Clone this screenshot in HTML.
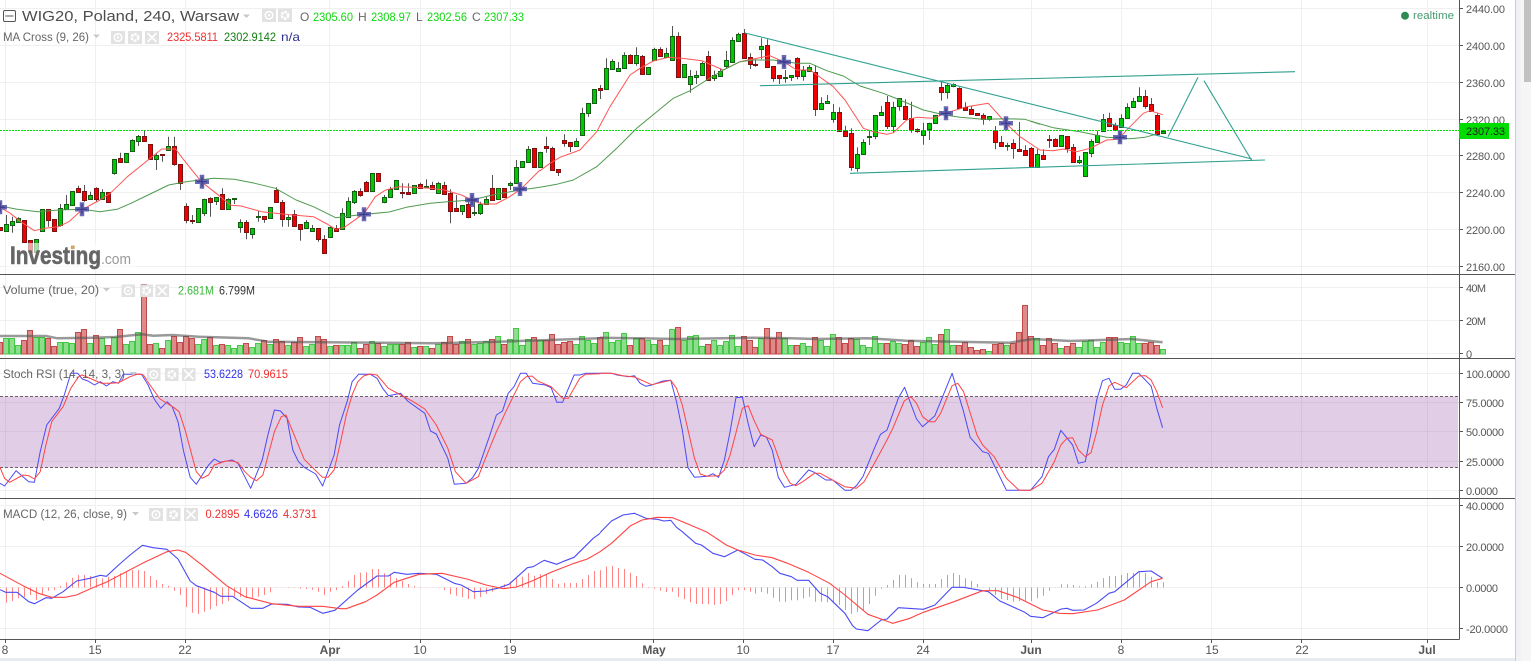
<!DOCTYPE html>
<html><head><meta charset="utf-8"><title>WIG20 chart</title>
<style>
html,body{margin:0;padding:0;background:#fff;width:1531px;height:661px;overflow:hidden}
svg{position:absolute;left:0;top:0;display:block}
text{font-family:"Liberation Sans",sans-serif}
</style></head><body>
<svg id="c" xmlns="http://www.w3.org/2000/svg" width="1531" height="661" viewBox="0 0 1531 661">
<rect width="1531" height="661" fill="#fff"/>
<g id="grid"></g>
<rect x="0" y="396.5" width="1458" height="71" fill="#9b59a8" opacity=".3"/>
<path d="M0 396.5H1458M0 467.5H1458" stroke="#6b5f6b" stroke-width="1" stroke-dasharray="3 2" fill="none"/>
<g id="vol"></g><g id="candles"></g><g id="lines"></g>
<rect x="7" y="243" width="128" height="28" fill="#fff" opacity=".62"/>
<text x="10" y="264" font-size="25" font-weight="bold" fill="#666" stroke="#666" stroke-width=".6" textLength="91" lengthAdjust="spacingAndGlyphs">Investing</text>
<text x="101" y="264" font-size="15" fill="#999" textLength="30" lengthAdjust="spacingAndGlyphs">.com</text>
<circle cx="72.5" cy="247.5" r="1.8" fill="#e9a34e"/>
<g id="icons"></g>
<!-- legend -->
<rect x="3.5" y="10.5" width="12" height="11" rx="1.5" fill="none" stroke="#555"/><path d="M5.5 16H13.5" stroke="#555"/>
<text x="22" y="21" font-size="15" fill="#4d4d4d" textLength="217" lengthAdjust="spacingAndGlyphs">WIG20, Poland, 240, Warsaw</text>
<text x="300" y="21" font-size="12" fill="#666">O</text><text x="313" y="21" font-size="12" fill="#0fd80f" textLength="40" lengthAdjust="spacingAndGlyphs">2305.60</text>
<text x="358" y="21" font-size="12" fill="#666">H</text><text x="371" y="21" font-size="12" fill="#0fd80f" textLength="40" lengthAdjust="spacingAndGlyphs">2308.97</text>
<text x="416" y="21" font-size="12" fill="#666">L</text><text x="427" y="21" font-size="12" fill="#0fd80f" textLength="40" lengthAdjust="spacingAndGlyphs">2302.56</text>
<text x="472" y="21" font-size="12" fill="#666">C</text><text x="484" y="21" font-size="12" fill="#0fd80f" textLength="40" lengthAdjust="spacingAndGlyphs">2307.33</text>
<text x="3" y="41" font-size="11.5" fill="#666" textLength="86" lengthAdjust="spacingAndGlyphs">MA Cross (9, 26)</text>
<text x="167" y="41" font-size="12" fill="#f03030" textLength="51" lengthAdjust="spacingAndGlyphs">2325.5811</text>
<text x="224" y="41" font-size="12" fill="#118011" textLength="52" lengthAdjust="spacingAndGlyphs">2302.9142</text>
<text x="281" y="41" font-size="12" fill="#303090" textLength="19" lengthAdjust="spacingAndGlyphs">n/a</text>
<text x="3" y="294" font-size="11.5" fill="#666" textLength="96" lengthAdjust="spacingAndGlyphs">Volume (true, 20)</text>
<text x="178" y="294.5" font-size="12" fill="#3cb83c" textLength="36" lengthAdjust="spacingAndGlyphs">2.681M</text>
<text x="219" y="294.5" font-size="12" fill="#333" textLength="36" lengthAdjust="spacingAndGlyphs">6.799M</text>
<text x="3" y="378" font-size="11.5" fill="#666" textLength="122" lengthAdjust="spacingAndGlyphs">Stoch RSI (14, 14, 3, 3)</text>
<text x="204" y="378" font-size="12" fill="#3030f0" textLength="39" lengthAdjust="spacingAndGlyphs">53.6228</text>
<text x="248" y="378" font-size="12" fill="#f03030" textLength="40" lengthAdjust="spacingAndGlyphs">70.9615</text>
<text x="3" y="518" font-size="11.5" fill="#666" textLength="124" lengthAdjust="spacingAndGlyphs">MACD (12, 26, close, 9)</text>
<text x="205.5" y="518" font-size="12" fill="#f03030" textLength="34" lengthAdjust="spacingAndGlyphs">0.2895</text>
<text x="244" y="518" font-size="12" fill="#3030f0" textLength="34" lengthAdjust="spacingAndGlyphs">4.6626</text>
<text x="283" y="518" font-size="12" fill="#f03030" textLength="34" lengthAdjust="spacingAndGlyphs">4.3731</text>
<circle cx="1405" cy="15.7" r="4" fill="#2e8b57"/>
<text x="1413" y="19" font-size="11" fill="#4a9a70" textLength="41" lengthAdjust="spacingAndGlyphs">realtime</text>
<!-- axes -->
<path d="M0 274.5H1515M0 358.5H1515M0 498.5H1515M0 639.5H1459.5M1459.5 0V639.5" stroke="#555" fill="none"/>
<g font-size="11" fill="#555">
<text x="1466" y="13" textLength="39">2440.00</text><text x="1466" y="50" textLength="39">2400.00</text><text x="1466" y="87" textLength="39">2360.00</text><text x="1466" y="124" textLength="39">2320.00</text><text x="1466" y="160" textLength="39">2280.00</text><text x="1466" y="197" textLength="39">2240.00</text><text x="1466" y="234" textLength="39">2200.00</text><text x="1466" y="271" textLength="39">2160.00</text>
<text x="1466" y="292" textLength="20">40M</text><text x="1466" y="325" textLength="20">20M</text><text x="1466" y="358">0</text>
<text x="1466" y="378" textLength="44">100.0000</text><text x="1466" y="407" textLength="38">75.0000</text><text x="1466" y="436" textLength="38">50.0000</text><text x="1466" y="466" textLength="38">25.0000</text><text x="1466" y="495" textLength="32">0.0000</text>
<text x="1466" y="510" textLength="38">40.0000</text><text x="1466" y="551" textLength="38">20.0000</text><text x="1466" y="592" textLength="32">0.0000</text><text x="1466" y="633" textLength="42">-20.0000</text>
</g>
<rect x="1459" y="123" width="50" height="16" fill="#00dc00"/>
<text x="1466" y="135" font-size="11" fill="#222" textLength="39">2307.33</text>
<g font-size="12" fill="#555" text-anchor="middle">
<text x="5" y="654">8</text><text x="95" y="654">15</text><text x="185" y="654">22</text><text x="330" y="654" font-weight="bold">Apr</text><text x="420" y="654">10</text><text x="510" y="654">19</text><text x="654" y="654" font-weight="bold">May</text><text x="743" y="654">10</text><text x="833" y="654">17</text><text x="923" y="654">24</text><text x="1031" y="654" font-weight="bold">Jun</text><text x="1121" y="654">8</text><text x="1212" y="654">15</text><text x="1302" y="654">22</text><text x="1427" y="654" font-weight="bold">Jul</text>
</g>
<!-- bottom + scrollbar -->
<rect x="0" y="658" width="1515" height="3" fill="#e8ecef"/>
<rect x="1515" y="0" width="1" height="661" fill="#c8ccd2"/>
<rect x="1516" y="0" width="5" height="661" fill="#f0f2f5"/>
<rect x="1521" y="0" width="10" height="661" fill="#f6f6f6"/>
<rect x="1524" y="0" width="7" height="82" fill="#c1c1c1"/>
</svg>
<script>
var NS="http://www.w3.org/2000/svg";
function el(p,n,a){var e=document.createElementNS(NS,n);for(var k in a)e.setAttribute(k,a[k]);document.getElementById(p).appendChild(e);return e}
function G(i){return 5.996*i}
var ys=[8.5,45.5,82.5,119.5,155.5,192.5,229.5,266.5,287.5,320.5,353.5,373.5,402.5,431.5,461.5,490.5,505.5,546.5,587.5,628.5];
var xs=[5,95,185,329,420,510,653,743,833,923,1031,1121,1211,1301,1427];
var d="";ys.forEach(function(y){d+="M0 "+y+"H1459"});xs.forEach(function(x){d+="M"+(x+.5)+" 0V639"});
el("grid","path",{d:d,stroke:"#f0f0f0",fill:"none"});
var t="";ys.forEach(function(y){t+="M1459 "+y+"h4"});xs.forEach(function(x){t+="M"+(x+.5)+" 639v4"});
el("grid","path",{d:t,stroke:"#555",fill:"none"});
var C="682 690 r;673 692 g 645;664 674 g 650 698;655 665 g 652;660 725 r;720 755 r;718 755 g;628 692 g;628 660 r 628 680;657 692 r;625 675 g 612 680;613 626 g 585 630;574 614 g;565 575 r 557;574 600 r 555 605;586 596 g 575;564 598 r 562 605;576 596 g 568;577 607 r;478 518 g 478 524;475 485 r 458;460 485 g;420 452 g 418 456;408 422 g 405 438;408 424 r 390;433 478 r;465 478 g 458 510;462 466 r 462 485;439 449 g 410;439 493 r 410 497;493 548 r 493 570;618 661 r 610 670;660 664 r 645 672;625 665 g;596 638 g 596 648;595 605 r 592 650;592 604 g 592 615;583 626 r 565;598 626 g 595;595 598 g 595 612;665 680 g 658 698;667 697 r 660 718;685 701 g 685 716;649 651 g 633 665;649 656 r 649 668;622 653 g;570 605 r 562;606 658 r 600 680;652 658 g 645 680;643 678 r 630;673 686 r 673 722;667 683 g 660;685 692 g 675;685 716 r 685 725;717 758 r 705;682 710 g 680 712;685 692 r 675;638 688 g 625;604 650 g 592;574 605 g 570 612;574 584 r 565 590;547 572 r 543;520 572 g;520 544 r;592 607 g 585 610;568 592 g 560;541 568 g;576 578 r 550 595;576 581 r 550 583;556 580 g;553 563 r 548;559 562 g 538 565;556 568 r 545 570;549 580 g 545 582;556 581 r 545;580 632 r 568 670;625 632 r 585 635;616 632 g 616 645;613 652 r 605 655;636 640 g 600 648;613 638 g 605 645;598 613 g 590;565 600 r 525;565 598 g;565 590 r;550 556 g 545 570;500 548 g 480;484 500 g 484 503;448 487 g 438;445 502 r;455 500 g;"
+"437 445 r 410 458;445 510 r 440 512;508 515 r 508 528;421 428 r 403 440;427 437 r 425 456;424 437 g 415;340 404 g 323 408;310 340 g 310 350;268 310 g;265 269 r 255 297;205 268 g 175;184 206 g 178;205 213 g 186 216;166 205 g 157;166 188 r 163;166 190 g 142 197;169 221 r 165 225;202 221 g;148 179 g 143;148 167 r 142 170;160 170 g 143;109 179 g 78;109 230 r 97;193 230 g 193 233;229 251 g 210 278;226 230 g 212 252;190 224 g 185;169 239 r 153;226 235 g 212 243;212 227 g 205;181 197 g 153 205;121 185 g 112;103 122 g 98 125;100 175 r 87;172 193 r 160 207;192 194 r 178 200;139 146 g 115 178;136 200 r 118;199 235 r 199 245;226 235 r 226 252;232 235 g 210 248;226 232 g 226 243;175 229 r 172 238;210 229 g 198 242;202 212 g 195;217 328 r 195 348;308 328 g 292;304 308 g 285;337 358 g 312 368;337 394 r 322;394 409 r 377;400 502 r 385 512;463 505 g 442 515;427 463 g 418;408 412 g 392 435;346 409 g 346 418;337 344 g 318 348;307 377 r 288 387;322 377 g 305 400;295 319 g 295 332;319 358 r 298;355 390 r 305 398;388 394 r 385 398;391 406 g 368 434;370 388 g 368 420;346 370 g;262 277 r 243 302;256 277 g 250 296;253 257 g 250 262;265 323 r 262;322 329 r 307;327 343 r 318;340 344 r;346 358 r 340 374;349 358 g 349 362;389 427 r 378 448;427 439 r 408;435 437 g 428 452;428 445 r 418 476;446 454 r 366;451 466 r 436;445 500 r 441;461 500 g 448;466 476 r 448;417 419 r 405 443;418 437 r 415;406 437 g;409 443 r 409 458;442 487 r 432;481 485 g 468 492;457 529 g;422 458 g 418 472;406 425 g 392;356 392 g 342;355 377 r 338;376 391 r 368;355 380 g 343;322 355 g 310;304 322 g 293;289 302 g 262;289 317 r 270 326;313 332 r 294;346 401 r 338;394 400 g 390";
var cs=C.split(";").map(function(s){return s.split(" ")});
var w="",gb="",rb="";
cs.forEach(function(a,i){var t=+a[0]/3,b=+a[1]/3,wt=a[3]?+a[3]/3:t,wb=a[4]?+a[4]/3:b,r=Math.round(G(i));
 var T=Math.round(t)+.5,B=Math.round(b)+.5;if(B<=T)B=T+1;
 w+="M"+(r+.5)+" "+wt.toFixed(1)+"V"+wb.toFixed(1);
 var s="M"+(r-1.5)+" "+T+"H"+(r+2.5)+"V"+B+"H"+(r-1.5)+"Z";
 if(a[2]=="g")gb+=s;else rb+=s;});
el("candles","path",{d:w,stroke:"#555",fill:"none"});
el("candles","path",{d:gb,fill:"#00c800",stroke:"#155c15"});
el("candles","path",{d:rb,fill:"#f00000",stroke:"#7a1414"});
/* volume */
var V=[200,190,190,210,195,165,185,185,190,213,202,202,204,172,162,204,180,190,210,185,162,208,198,172,28,208,204,220,195,183,202,183,190,208,192,186,210,208,210,220,210,203,216,204,196,207,193,198,210,202,186,213,207,183,192,213,210,210,210,202,219,208,198,204,213,207,207,207,201,216,213,213,219,208,202,183,207,198,192,207,204,198,192,183,207,192,160,210,192,186,195,196,177,207,201,198,207,183,195,204,187,171,200,195,175,210,190,189,195,207,195,210,162,156,195,183,180,213,207,195,210,198,180,213,183,195,216,190,159,190,171,190,210,210,204,213,186,195,213,177,186,204,189,192,210,216,183,204,205,198,204,207,195,213,201,186,207,177,162,210,210,201,216,225,222,228,207,204,210,203,171,90,183,190,210,189,204,219,213,204,216,198,195,216,201,186,186,201,204,183,204,204,201,210,222];
var vg="",vr="";V.forEach(function(y,i){var top=Math.round(275+y/3)+.5,r=Math.round(G(i));var s="M"+(r-2.5)+" 354V"+top+"H"+(r+2.5)+"V354Z";if(cs[i]&&cs[i][2]=="g")vg+=s;else vr+=s;});
el("vol","path",{d:vg,fill:"#8edc8e",stroke:"#45c845"});
el("vol","path",{d:vr,fill:"#dc8a8a",stroke:"#c24a4a"});
function P(s,sx,ox,sy,oy){return s.split(" ").map(function(p){var a=p.split(",");return (+a[0]/sx+ox).toFixed(1)+","+(+a[1]/sy+oy).toFixed(1)}).join(" ")}
function L(pts,col,wd,op){el("lines","polyline",{points:pts,fill:"none",stroke:col,"stroke-width":wd,opacity:op||1,"stroke-linejoin":"round"})}
var Z1=2.904,Z4=2.613;
/* volume MA */
L(P("0,183 120,183 150,190 240,188 300,186 372,178 400,182 450,180 520,185 650,190 700,200 1130,205 1200,203 1300,200 1568,190",Z4,0,3,275),"#555",2.5,.6);
L(P("0,188 100,190 200,192 400,188 500,190 560,192 700,190 800,197 1000,202 1070,203 1130,192 1230,198 1390,192 1470,202",Z4,600,3,275),"#555",2.5,.6);
/* MA lines */
var R="#f55",Gn="#4f9a4f";
L(P("0,622 30,640 60,665 100,692 130,685 170,680 200,665 240,628 290,600 320,580 370,530 430,480 470,447 510,447 530,475 585,545 640,590 670,616 700,618 760,635 800,640 850,645 910,650 950,672 975,688 1000,682 1058,640 1090,590 1120,570 1160,560 1200,562 1250,565 1290,570 1340,585 1370,600 1400,612 1440,612 1480,590 1512,568 1568,510",Z1,0,3,0),R,1);
L(P("0,512 30,490 60,472 120,450 170,395 210,320 270,225 300,205 340,183 385,172 425,175 485,182 550,210 600,185 640,177 690,167 730,185 770,210 810,210 880,260 915,300 970,385 1000,395 1040,403 1060,398 1100,360 1130,352 1180,355 1215,340 1280,320 1345,310 1400,372 1440,410 1500,450",3,540,3,0),R,1);
L(P("30,450 70,452 100,447 140,455 180,445 230,420 265,418 300,380 340,340 360,332 398,344",3,1030,3,0),R,1);
L(P("0,618 50,628 110,635 170,630 240,628 290,635 340,628 380,610 430,585 490,555 540,545 620,535 680,538 740,550 800,565 860,600 910,620 975,653 1040,645 1130,636 1180,622 1250,610 1300,605 1370,600 1430,585 1510,570 1568,562",Z1,0,3,0),Gn,1);
L(P("0,562 50,553 100,540 170,500 230,445 290,385 345,340 400,295 450,272 500,240 550,210 600,185 640,180 700,180 770,190 810,190 860,212 910,228 960,258 1030,280 1080,300 1150,330 1215,345 1260,352 1330,358 1400,356 1455,358 1500,373",3,540,3,0),Gn,1);
L(P("0,363 70,383 150,395 230,412 300,416 345,412 380,402",3,1030,3,0),Gn,1);
/* crosses */
[[0,207.3],[82,209.3],[202,181.7],[364,214.3],[472,200],[520,189],[784,62],[946,113.3],[1006,123.3],[1120,137.3]].forEach(function(p){
 el("lines","path",{d:"M"+(p[0]-7)+" "+p[1]+"h14M"+p[0]+" "+(p[1]-7)+"v14",stroke:"#5050a6","stroke-width":4.5,opacity:.85,fill:"none"});
 el("lines","path",{d:"M"+(p[0]-5)+" "+p[1]+"h10M"+p[0]+" "+(p[1]-5)+"v10",stroke:"#2f2f85","stroke-width":1.2,opacity:.8,fill:"none"});
});
/* price line */
el("lines","path",{d:"M0 130.5H1459",stroke:"#00dc00","stroke-width":1,"stroke-dasharray":"2 1",fill:"none"});
/* trend lines */
el("lines","path",{d:"M745 33L1252 159M760 85.7L1295 71.7M850 173.3L1265 160M1168 136.7L1198 77.3M1204 80.7L1252 161",stroke:"#2fa08e","stroke-width":1.1,fill:"none"});
/* stoch */
var B="#4a4af5",RR="#f44";
L(P("0,625 12,633 42,587 75,620 90,622 105,530 122,450 155,400 168,360 185,295 203,295 215,312 230,318 247,330 262,320 278,333 295,320 310,325 322,298 370,298 387,330 403,372 420,400 437,380 450,395 465,440 480,530 497,607 513,628 545,570 560,552 575,562 607,555 622,565 655,640 685,555 700,480 717,405 733,408 750,430 765,525 780,560 795,577 825,597 843,633 873,540 887,450 907,380 920,320 937,298 968,298 985,310 1000,340 1015,362 1047,355 1065,378 1110,415 1125,468 1140,477 1170,550 1187,628 1218,625 1235,608 1250,580 1280,480 1297,420 1313,408 1328,355 1343,335 1360,295 1375,295 1392,325 1425,330 1440,338 1455,382 1470,382 1500,300 1515,300 1530,295 1568,295",Z4,0,3,275),B,1);
L(P("0,577 12,610 25,622 60,600 75,602 90,612 105,590 120,510 135,440 165,395 185,340 205,305 215,300 245,315 265,325 290,325 310,323 340,305 360,297 375,300 392,330 418,372 455,398 468,410 485,470 513,590 528,610 545,600 560,570 590,558 607,558 622,563 640,590 655,607 670,617 687,600 717,470 735,425 747,420 765,470 795,553 825,587 843,607 857,607 873,585 890,500 905,420 920,360 935,320 950,303 967,297 985,300 1015,340 1047,360 1080,380 1110,402 1140,450 1170,520 1190,590 1218,625 1250,605 1265,560 1297,470 1328,395 1360,320 1375,305 1390,303 1405,318 1440,335 1470,370 1485,370 1515,310 1530,298 1568,296",Z4,0,3,275),RR,1);
L(P("0,295 30,295 45,300 75,305 90,302 105,325 120,334 135,330 165,318 185,316 200,380 215,465 230,578 247,607 280,604 295,596 310,607 325,555 340,470 355,368 372,366 387,445 403,515 420,480 435,487 450,525 466,607 482,637 512,628 545,585 560,592 590,615 608,615 640,646 655,646 670,632 687,605 717,520 733,478 750,465 780,368 796,337 827,432 843,455 875,422 890,380 920,295 950,410 967,487 1000,530 1015,535 1062,646 1125,646 1155,605 1172,545 1187,523 1204,466 1235,510 1250,565 1268,560 1283,475 1298,375 1313,317 1330,310 1345,343 1360,343 1375,330 1392,295 1408,295 1440,333 1455,400 1470,458",Z4,600,3,275),B,1);
L(P("0,295 30,295 60,302 90,306 135,329 185,316 200,340 215,390 247,550 262,597 280,604 310,602 325,585 340,540 372,400 387,392 403,437 420,478 450,495 480,590 497,625 512,632 530,620 560,595 575,595 640,635 670,640 690,620 717,565 750,495 765,460 795,378 812,365 827,385 843,425 860,440 875,440 890,415 920,332 935,325 950,350 985,480 1000,510 1030,545 1062,610 1095,646 1125,646 1155,625 1187,560 1204,510 1220,490 1235,488 1250,525 1268,545 1283,533 1298,470 1313,390 1330,333 1345,322 1375,338 1408,303 1425,302 1440,315 1455,350 1470,398",Z4,600,3,275),RR,1);
/* macd hist */
var H=[278,323,318,310,306,300,315,300,287,286,273,262,248,240,240,243,250,250,245,243,235,230,225,225,228,243,255,267,272,287,300,336,353,357,350,343,333,327,318,305,305,310,310,305,300,292,278,278,276,278,281,282,284,290,300,290,285,273,258,240,233,232,222,222,235,240,250,258,267,273,276,278,278,278,285,298,302,307,312,312,307,297,290,280,268,260,250,245,234,242,238,237,252,266,264,264,264,252,240,228,226,215,213,219,222,233,243,265,276,281,287,291,290,306,313,322,327,327,328,330,327,318,300,285,285,290,296,291,296,308,320,320,316,316,310,305,320,320,322,325,330,345,357,350,345,327,302,281,270,255,240,240,250,262,267,267,267,252,240,234,240,250,257,267,278,285,300,312,315,320,318,318,318,310,302,287,278,268,268,270,274,274,268,261,250,243,243,240,234,234,232,234,245,262,262];
var hd="";H.forEach(function(y,i){hd+="M"+(Math.round(G(i))+.5)+" 587.5V"+(495+y/3).toFixed(1)});
el("lines","path",{d:hd,stroke:"#f66",fill:"none",opacity:.8});
/* macd lines */
L(P("0,284 15,292 45,292 75,320 90,326 120,308 135,310 165,290 200,258 235,250 262,241 278,244 310,210 340,180 372,151 400,158 436,163 465,192 497,258 513,272 560,292 577,304 608,304 655,340 687,340 710,327 750,328 780,336 810,337 843,355 875,346 935,285 985,243 1015,243 1030,232 1063,238 1095,235 1140,238 1187,265 1205,270 1237,290 1268,288 1300,280 1330,268 1378,218 1393,215 1422,196 1455,208 1470,200 1500,187 1550,130 1568,115",Z4,0,3,495),B,1.1);
L(P("0,235 60,272 100,295 135,307 170,307 200,300 235,282 280,260 372,205 436,170 465,165 485,172 530,212 592,272 640,305 710,326 780,334 843,334 890,341 905,341 955,320 985,300 1030,262 1095,238 1155,235 1220,252 1270,270 1315,281 1350,276 1390,258 1440,232 1500,205 1535,192 1568,170",Z4,0,3,495),RR,1.1);
L(P("0,113 30,78 60,60 90,55 120,70 150,73 167,78 185,76 200,97 215,110 250,145 265,150 295,175 325,185 360,165 405,193 425,195 450,215 470,235 500,245 515,256 545,256 575,295 595,305 640,355 660,392 670,402 700,407 735,375 750,372 780,338 845,343 875,330 920,277 950,277 1015,290 1045,318 1110,352 1125,364 1157,368 1172,360 1205,342 1220,340 1235,346 1265,345 1297,325 1330,295 1345,290 1408,230 1440,228 1470,250",Z4,600,3,495),B,1.1);
L(P("0,170 30,145 80,92 110,75 150,67 190,68 225,85 280,112 330,150 360,165 405,180 450,188 490,205 545,232 600,265 640,300 700,358 765,385 810,370 845,352 925,320 1000,287 1040,287 1090,307 1157,345 1200,355 1235,356 1300,345 1370,315 1440,260 1470,250",Z4,600,3,495),RR,1.1);
/* legend icon boxes */
function box(x,y,w,h,k){el("icons","rect",{x:x,y:y,width:w,height:h,fill:"#e2e2e2"});var cx=x+w/2,cy=y+h/2;
 if(k=="e"){el("icons","circle",{cx:cx,cy:cy,r:3.8,fill:"none",stroke:"#fff","stroke-width":1.5});el("icons","circle",{cx:cx,cy:cy,r:1.2,fill:"#fff"});}
 if(k=="g"){el("icons","circle",{cx:cx,cy:cy,r:3.2,fill:"none",stroke:"#fff","stroke-width":2.6,"stroke-dasharray":"2.6 .9"});}
 if(k=="x"){el("icons","path",{d:"M"+(cx-4.5)+" "+(cy-4.5)+"l9 9m0 -9l-9 9",stroke:"#fff","stroke-width":1.6,fill:"none"});}}
function caret(x,y){el("icons","path",{d:"M"+x+" "+y+"h7l-3.5 3.5z",fill:"#c8c8c8"})}
caret(243,14.5);box(262,8.5,14,13.5,"e");box(278,8.5,14,13.5,"g");
caret(93,34.5);box(111,31,14,13,"e");box(128,31,14,13,"g");box(145,31,14,13,"x");
caret(103,288);box(121.5,284.5,13.5,12.5,"e");box(140,284.5,13,12.5,"g");box(155.5,284.5,13.5,12.5,"x");
caret(130,372);box(147,368,13.5,13,"e");box(165,368,13.5,13,"g");box(182,368,13.5,13,"x");
caret(132,512);box(149,508,14,13,"e");box(166.5,508,14,13,"g");box(184,508,14,13,"x");
</script>
</body></html>
